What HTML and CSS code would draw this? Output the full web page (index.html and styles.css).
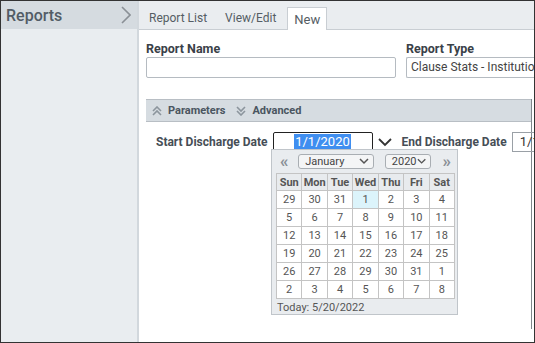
FILE: index.html
```html
<!DOCTYPE html>
<html>
	<head>
		<meta charset="utf-8" />
		<title>Reports</title>
		<link rel="stylesheet" href="styles.css">
	</head>
	<body>
		<div class="frame">
			<div class="side">
				<div class="side-head">
					<span>Reports</span>
					<svg class="side-arrow" width="10" height="18" viewBox="0 0 10 18"><path d="M1 1 L9 9 L1 17" fill="none" stroke="#8a9096" stroke-width="1.6"/></svg>
				</div>
			</div>
			<div class="main">
				<div class="tabs">
					<a class="tab" href="#">Report List</a>
					<a class="tab" href="#">View/Edit</a>
					<a class="tab tab-on" href="#">New</a>
				</div>
				<div class="content">
					<div class="fields">
						<div class="field field-name">
							<label>Report Name</label>
							<input class="txt" type="text" value="" />
						</div>
						<div class="field field-type">
							<label>Report Type</label>
							<div class="sel">Clause Stats - Institutional</div>
						</div>
					</div>
					<div class="panel">
						<div class="panel-head">
							<svg width="10" height="10" viewBox="0 0 10 10"><path d="M1 5 L5 1 L9 5 M1 9 L5 5 L9 9" fill="none" stroke="#8c959d" stroke-width="1.6"/></svg>
							<span class="ph-text">Parameters</span>
							<svg width="10" height="10" viewBox="0 0 10 10"><path d="M1 1 L5 5 L9 1 M1 5 L5 9 L9 5" fill="none" stroke="#8c959d" stroke-width="1.6"/></svg>
							<span class="ph-text">Advanced</span>
						</div>
						<div class="panel-body">
							<span class="plabel">Start Discharge Date</span>
							<div class="date date-focus"><span class="hl">1/1/2020</span></div>
							<svg class="drop" width="14" height="10" viewBox="0 0 14 10"><path d="M1 2 L7 8 L13 2" fill="none" stroke="#333" stroke-width="1.8"/></svg>
							<span class="plabel">End Discharge Date</span>
							<div class="date date-end">1/1/2020</div>
						</div>
					</div>
				</div>
			</div>

			<div class="cal">
				<div class="cal-head">
					<span class="cal-nav">&laquo;</span>
					<div class="cal-sel cal-month">January<svg width="10" height="7" viewBox="0 0 10 7"><path d="M1 1 L5 5 L9 1" fill="none" stroke="#555" stroke-width="1.5"/></svg></div>
					<div class="cal-sel cal-year">2020<svg width="10" height="7" viewBox="0 0 10 7"><path d="M1 1 L5 5 L9 1" fill="none" stroke="#555" stroke-width="1.5"/></svg></div>
					<span class="cal-nav">&raquo;</span>
				</div>
				<table class="cal-grid">
					<tr><th>Sun</th><th>Mon</th><th>Tue</th><th>Wed</th><th>Thu</th><th>Fri</th><th>Sat</th></tr>
					<tr><td>29</td><td>30</td><td>31</td><td class="sel-day">1</td><td>2</td><td>3</td><td>4</td></tr>
					<tr><td>5</td><td>6</td><td>7</td><td>8</td><td>9</td><td>10</td><td>11</td></tr>
					<tr><td>12</td><td>13</td><td>14</td><td>15</td><td>16</td><td>17</td><td>18</td></tr>
					<tr><td>19</td><td>20</td><td>21</td><td>22</td><td>23</td><td>24</td><td>25</td></tr>
					<tr><td>26</td><td>27</td><td>28</td><td>29</td><td>30</td><td>31</td><td>1</td></tr>
					<tr><td>2</td><td>3</td><td>4</td><td>5</td><td>6</td><td>7</td><td>8</td></tr>
				</table>
				<div class="cal-today">Today: 5/20/2022</div>
			</div>
		</div>
	</body>
</html>
```
FILE: styles.css
```css
body{margin: 0px;padding: 0px;font-family: Roboto, "Liberation Sans", sans-serif;font-size: 12px;color: #333;}
.frame{
	width: 535px;height: 343px;box-sizing: border-box;
	border: 1px solid #333;
	display: flex;position: relative;overflow: hidden;
	background: #fff;
}
.side{
	width: 136px;flex: none;
	background: #e9edf0;border-right: 2px solid #d2d8dd;
}
.side-head{
	height: 28px;background: #d5dbe0;
	display: flex;align-items: center;justify-content: space-between;
	padding: 0px 6px 0px 5px;
	font-size: 16px;font-weight: 500;color: #525c66;
}
.main{flex: 1;display: flex;flex-direction: column;min-width: 0;}
.tabs{
	height: 28px;background: #eaedf0;
	border-bottom: 1px solid #c9ced3;
	display: flex;align-items: flex-end;
	padding-left: 3px;
}
.tab{
	text-decoration: none;color: #555d64;font-size: 12px;
	padding: 0px 7px;height: 21px;line-height: 21px;
	margin-right: 4px;
}
.tab-on{
	background: #fff;border: 1px solid #c9ced3;border-bottom: none;
	margin-bottom: -1px;height: 22px;padding: 0px 6px;line-height: 24px;
	font-size: 13px;
}
.content{padding: 10px 0px 0px 7px;}
.fields{display: flex;gap: 10px;}
.field{display: flex;flex-direction: column;}
.field label{font-size: 12.5px;font-weight: bold;color: #3a4148;height: 17px;line-height: 17px;}
.field-name{width: 250px;flex: none;}
.field-type{flex: 1;min-width: 0;}
.txt{
	height: 19px;margin: 0px;padding: 0px;
	border: 1px solid #b5bbc1;border-radius: 2px;outline: none;
	box-sizing: content-box;width: 248px;
}
.sel{
	height: 19px;line-height: 19px;
	border: 1px solid #b5bbc1;border-right: none;border-radius: 2px 0px 0px 2px;
	padding-left: 4px;font-size: 12px;color: #444;
	white-space: nowrap;overflow: hidden;
}
.panel{
	margin-top: 21px;margin-right: 2px;
	border-right: 1px solid #80868c;
	height: 230px;
}
.panel-head{
	height: 21px;background: #d6dce1;
	border-top: 1px solid #b8bec4;border-bottom: 1px solid #b8bec4;
	display: flex;align-items: center;padding-left: 6px;gap: 6px;
}
.ph-text{font-size: 11px;font-weight: bold;color: #4a5560;margin-right: 5px;}
.panel-body{
	display: flex;align-items: center;
	padding: 10px 0px 0px 10px;
}
.plabel{font-size: 12px;font-weight: bold;color: #464e56;white-space: nowrap;flex: none;}
.date{
	height: 18px;line-height: 18px;box-sizing: content-box;flex: none;
	border: 1px solid #9aa0a6;text-align: center;font-size: 13px;
}
.date-focus{
	width: 98px;margin-left: 5px;
	border: 1px solid #222;border-radius: 2px;
}
.hl{background: #3f8ef0;color: #fff;padding: 0px 1px;}
.drop{margin: 0px 10px 0px 5px;flex: none;}
.date-end{width: 40px;margin-left: 5px;text-align: left;padding-left: 7px;}
.cal{
	position: absolute;left: 270px;top: 148px;
	width: 187px;height: 166px;box-sizing: border-box;
	background: #e9ecef;border: 1px solid #c0c5ca;
	padding: 3px 3px 0px 3px;
}
.cal-head{
	display: flex;align-items: center;justify-content: space-between;
	height: 17px;padding: 0px 3px 0px 5px;
}
.cal-nav{font-size: 17px;font-weight: bold;color: #8a9096;line-height: 17px;}
.cal-sel{
	height: 15px;box-sizing: border-box;
	background: #f4f5f6;border: 1px solid #a9aeb3;border-radius: 3px;
	display: flex;align-items: center;justify-content: space-between;
	padding: 0px 4px 0px 6px;font-size: 11px;color: #444;
}
.cal-month{width: 76px;margin-left: 6px;}
.cal-year{width: 46px;margin-left: 7px;margin-right: 8px;}
.cal-grid{
	border-collapse: collapse;width: 179px;margin: 3px 0px 0px 1px;
	background: #fff;table-layout: fixed;
}
.cal-grid th,.cal-grid td{
	border: 1px solid #c4c4c4;text-align: center;padding: 0px;
	font-size: 11px;color: #555;
}
.cal-grid th{height: 16px;background: #e8ebee;font-weight: bold;color: #555;}
.cal-grid td{height: 17px;}
.cal-grid td.sel-day{background: #dcf4fb;}
.cal-today{font-size: 11px;color: #555;padding: 2px 0px 0px 2px;}
```
